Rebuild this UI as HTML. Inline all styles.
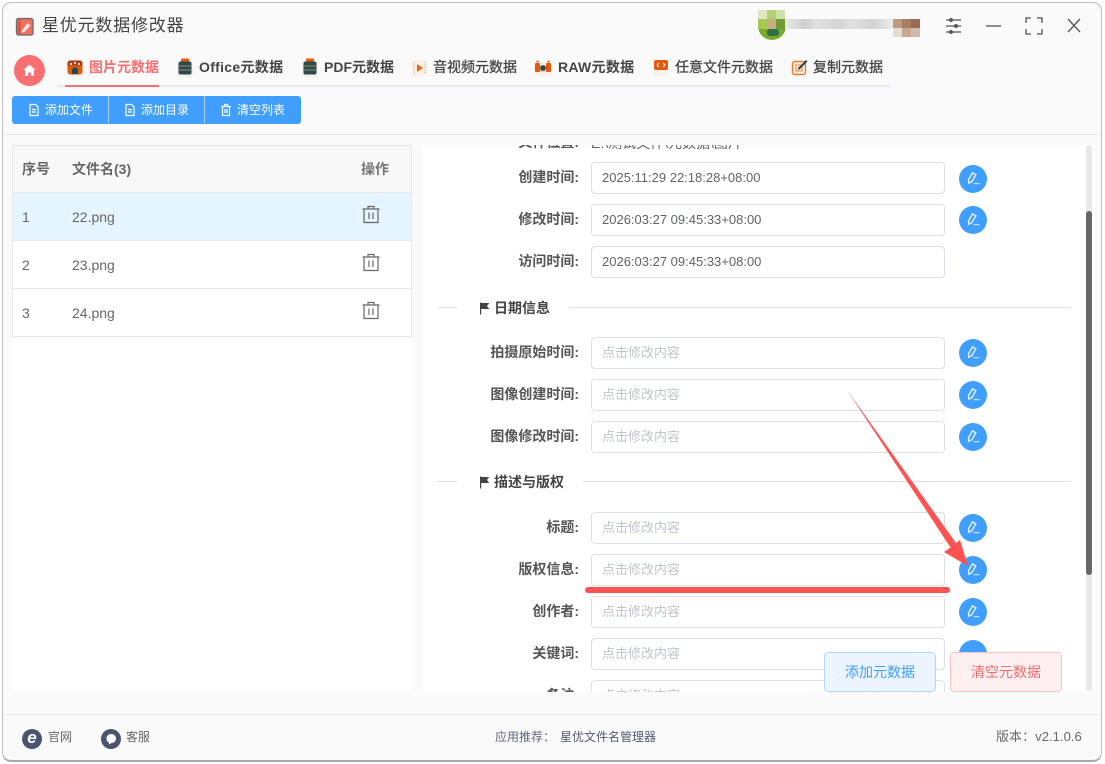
<!DOCTYPE html>
<html lang="zh"><head><meta charset="utf-8"><title>星优元数据修改器</title>
<style>
html,body{margin:0;padding:0;width:1105px;height:764px;overflow:hidden;background:#fff}
body{font-family:"Liberation Sans","Noto Sans CJK SC",sans-serif;position:relative;color:#555}
div,span,svg{position:absolute;box-sizing:border-box}
.t{white-space:nowrap;line-height:20px}
#win{left:2px;top:2px;width:1100px;height:760px;background:#fafafa;border:1px solid #bdbdbd;border-bottom:2px solid #a8a8a8;border-radius:9px}
.tab{top:57px;font-size:14px;font-weight:700;color:#444;white-space:nowrap;line-height:20px}
.tbt{top:100px;font-size:12px;color:#fff;line-height:20px;white-space:nowrap}
.cell{font-size:14px;color:#666;line-height:20px;white-space:nowrap}
.lab{width:130px;left:27px;text-align:right;font-size:14px;font-weight:700;color:#555;line-height:20px;white-space:nowrap}
.inp{left:169px;width:354px;height:32px;background:#fff;border:1px solid #dcdfe6;border-radius:4px;padding-left:10px;font-size:13px;line-height:29px;color:#606266;white-space:nowrap}
.ph{color:#c0c4cc}
.c{left:537px;width:28px;height:28px;border-radius:50%;background:#409eff}
.sec{font-size:14px;font-weight:700;color:#444;line-height:20px;white-space:nowrap}
.ln{height:1px;background:#dcdfe6}
.bg{background:#f8f1ea;border-radius:3px}
</style></head><body>
<div id="win"></div>

<!-- title -->
<svg style="left:15px;top:17px" width="20" height="20" viewBox="0 0 20 20"><rect x="1.500" y="1.500" width="16.500" height="16.500" rx="2" fill="#f0705f" stroke="#6a6a6a" stroke-width="1.300"/><rect x="3" y="2.500" width="2.500" height="14.500" fill="#d9543f"/><path d="M7 13.500l5.500-7.500 3 2.500-6 6.500-3 .8z" fill="#fbe3dc"/></svg>
<div class="t" style="left:42px;top:16px;font-size:17px;letter-spacing:.8px;color:#444">星优元数据修改器</div>

<!-- avatar blurred -->
<div style="left:758px;top:22px;width:28px;height:18px;border-radius:0 0 14px 14px;background:#7aa92f"></div>
<div style="left:758px;top:10px;width:9px;height:10px;background:#dfe8c2"></div>
<div style="left:767px;top:10px;width:9px;height:10px;background:#b2cf74"></div>
<div style="left:776px;top:10px;width:9px;height:10px;background:#cfe1a9"></div>
<div style="left:758px;top:19px;width:9px;height:10px;background:#a6c953"></div>
<div style="left:767px;top:19px;width:9px;height:10px;background:#c4b182"></div>
<div style="left:776px;top:19px;width:9px;height:10px;background:#6f9a35"></div>
<div style="left:767px;top:29px;width:12px;height:7px;border-radius:3px;background:#2f6f45"></div>
<div style="left:785px;top:19px;width:108px;height:10px;background:linear-gradient(90deg,#e8eee0 0,#dcdcdc 8%,#cfcfcf 18%,#e0e0e0 30%,#d3d3d3 50%,#e2e2e2 62%,#d2d2d2 80%,#ececec 100%)"></div>
<div style="left:893px;top:19px;width:9px;height:9px;background:#bd9a82"></div>
<div style="left:902px;top:19px;width:9px;height:9px;background:#a67f60"></div>
<div style="left:911px;top:19px;width:9px;height:9px;background:#966c50"></div>
<div style="left:893px;top:28px;width:9px;height:9px;background:#e8dbd0"></div>
<div style="left:902px;top:28px;width:9px;height:9px;background:#c9a78e"></div>
<div style="left:911px;top:28px;width:9px;height:9px;background:#cdbcae"></div>

<!-- window controls -->
<svg style="left:940px;top:12px" width="150" height="30" viewBox="0 0 150 30" fill="none" stroke="#555" stroke-width="1.300">
<path d="M6 8h15M6 14h15M6 20h15"/><circle cx="11" cy="8" r="1.300" fill="#555"/><circle cx="16" cy="14" r="1.300" fill="#555"/><circle cx="11" cy="20" r="1.300" fill="#555"/>
<path d="M46 14h15"/>
<path d="M86 11V6h5M97 6h5v5M102 17v5h-5M91 22h-5v-5"/>
<path d="M128 7l12 13M140 7l-12 13"/>
</svg>

<!-- home -->
<div style="left:14px;top:55px;width:31px;height:31px;border-radius:50%;background:#f96f72"></div>
<svg style="left:22px;top:63px" width="15" height="15" viewBox="0 0 15 15"><path d="M7.500 1.500L1.500 7h1.600v6h3V9.500h2.800V13h3V7h1.600z" fill="#fff"/></svg>

<!-- tabs -->
<div style="left:57px;top:85px;width:834px;height:2px;background:#e9e8f4"></div>
<div style="left:65px;top:85px;width:94px;height:2px;background:#f96f72"></div>
<div class="bg" style="left:66px;top:59px;width:18px;height:18px"></div>
<svg style="left:66px;top:59px" width="18" height="18" viewBox="0 0 18 18"><rect x="1.500" y="1.500" width="15" height="14" rx="3" fill="#e05a10"/><path d="M1.500 4.500q0-3 3-3h9q3 0 3 3v2h-15z" fill="#a8401a"/><path d="M6 15V10h1V8.500h4V10h1v5z" fill="#1f4a55"/><circle cx="5" cy="5" r="1" fill="#fff"/><circle cx="9" cy="4" r="1" fill="#fff"/><circle cx="13" cy="5" r="1" fill="#fff"/></svg>
<div class="tab" style="left:89px;color:#f96f72">图片元数据</div>
<div class="bg" style="left:177px;top:61px;width:16px;height:16px"></div>
<svg style="left:177px;top:58px" width="16" height="19" viewBox="0 0 16 19"><rect x="4" y="0.500" width="8" height="5" rx="1" fill="#e8590c"/><rect x="1.500" y="3.500" width="13" height="13" rx="2" fill="#2a4a50"/><path d="M2 8h12M2 12h12" stroke="#9a8a60"/></svg>
<div class="tab" style="left:199px;letter-spacing:.3px">Office元数据</div>
<div class="bg" style="left:302px;top:61px;width:16px;height:16px"></div>
<svg style="left:302px;top:58px" width="16" height="19" viewBox="0 0 16 19"><rect x="4" y="0.500" width="8" height="5" rx="1" fill="#e8590c"/><rect x="1.500" y="3.500" width="13" height="13" rx="2" fill="#2a4a50"/><path d="M2 8h12M2 12h12" stroke="#9a8a60"/></svg>
<div class="tab" style="left:324px">PDF元数据</div>
<svg style="left:411px;top:59px" width="17" height="18" viewBox="0 0 17 18"><rect x="1" y="1" width="15" height="16" rx="2" fill="#fbf1e6"/><path d="M6 5l6 4-6 4z" fill="#ee6a10"/><path d="M3 3v12M14 3v12" stroke="#c9b9a0" stroke-dasharray="1 1"/></svg>
<div class="tab" style="left:433px;font-weight:400;-webkit-text-stroke:.3px #444">音视频元数据</div>
<div class="bg" style="left:534px;top:62px;width:18px;height:14px"></div>
<svg style="left:534px;top:59px" width="18" height="16" viewBox="0 0 18 16"><rect x="1" y="4" width="5" height="9" rx="1" fill="#e8590c"/><rect x="12" y="4" width="5" height="9" rx="1" fill="#e8590c"/><rect x="6" y="6" width="6" height="7" fill="#f6c9a8"/><circle cx="9" cy="9" r="2.800" fill="#1f4a55"/><circle cx="3.500" cy="2.500" r="1.100" fill="#e8590c"/><circle cx="14.500" cy="2.500" r="1.100" fill="#e8590c"/></svg>
<div class="tab" style="left:558px;letter-spacing:.3px">RAW元数据</div>
<div class="bg" style="left:653px;top:66px;width:15px;height:10px"></div>
<svg style="left:652px;top:58px" width="18" height="17" viewBox="0 0 18 17"><rect x="2" y="2" width="14" height="10" rx="2" fill="#e8590c"/><path d="M7 5L5 7l2 2M11 5l2 2-2 2" stroke="#fff" fill="none"/></svg>
<div class="tab" style="left:675px;font-weight:400;-webkit-text-stroke:.3px #444">任意文件元数据</div>
<svg style="left:791px;top:58px" width="18" height="18" viewBox="0 0 18 18"><rect x="1.500" y="3.500" width="13" height="13" rx="2" fill="#fdf0e4" stroke="#ee7a2c" stroke-width="1.400"/><rect x="5" y="7" width="6" height="6" fill="none" stroke="#ee7a2c"/><path d="M7 10l8-8 1.500 1.500-8 8H7z" fill="#1f4a55"/></svg>
<div class="tab" style="left:813px;font-weight:400;-webkit-text-stroke:.3px #444">复制元数据</div>

<!-- toolbar -->
<div style="left:12px;top:96px;width:289px;height:28px;background:#409eff;border-radius:3px"></div>
<div style="left:108px;top:96px;width:1px;height:28px;background:#a8d2fb"></div>
<div style="left:204px;top:96px;width:1px;height:28px;background:#a8d2fb"></div>
<svg style="left:28px;top:103px" width="12" height="14" viewBox="0 0 12 14" fill="none" stroke="#fff" stroke-width="1.200"><path d="M2 1.500h5.500L10 4v8.500H2zM4 6.500h4M4 9h4"/></svg>
<div class="tbt" style="left:45px">添加文件</div>
<svg style="left:124px;top:103px" width="12" height="14" viewBox="0 0 12 14" fill="none" stroke="#fff" stroke-width="1.200"><path d="M2 1.500h5.500L10 4v8.500H2zM4 6.500h4M4 9h4"/></svg>
<div class="tbt" style="left:141px">添加目录</div>
<svg style="left:220px;top:103px" width="12" height="14" viewBox="0 0 12 14" fill="none" stroke="#fff" stroke-width="1.200"><path d="M1 3.500h10M4.500 3.500V1.500h3v2M2.500 3.500v9h7v-9M5 6v4M7 6v4"/></svg>
<div class="tbt" style="left:237px">清空列表</div>

<div style="left:3px;top:134px;width:1098px;height:1px;background:#ededed"></div>

<!-- file table -->
<div style="left:12px;top:145px;width:400px;height:546px;background:#fff"></div>
<div style="left:12px;top:145px;width:400px;height:192px;border:1px solid #e8e8e8;background:#fff"></div>
<div style="left:13px;top:146px;width:398px;height:46px;background:#f8f8f8"></div>
<div style="left:13px;top:192px;width:398px;height:1px;background:#e6eaee"></div>
<div style="left:13px;top:193px;width:398px;height:47px;background:#e4f5ff"></div>
<div style="left:13px;top:240px;width:398px;height:1px;background:#e6eaee"></div>
<div style="left:13px;top:288px;width:398px;height:1px;background:#e8e8e8"></div>
<div class="cell" style="left:22px;top:159px;font-weight:700;color:#666">序号</div>
<div class="cell" style="left:72px;top:159px;font-weight:700;color:#666">文件名(3)</div>
<div class="cell" style="left:361px;top:159px;font-weight:700;color:#777">操作</div>
<div class="cell" style="left:22px;top:207px">1</div><div class="cell" style="left:72px;top:207px">22.png</div>
<div class="cell" style="left:22px;top:255px">2</div><div class="cell" style="left:72px;top:255px">23.png</div>
<div class="cell" style="left:22px;top:303px">3</div><div class="cell" style="left:72px;top:303px">24.png</div>
<svg style="left:361px;top:204px" width="20" height="20" viewBox="0 0 20 20" fill="none" stroke="#666" stroke-width="1.200"><path d="M1.500 5h17M7 5V2.500h6V5M3 5v13.500h14V5M8 8.500v6.500M12 8.500v6.500"/></svg>
<svg style="left:361px;top:252px" width="20" height="20" viewBox="0 0 20 20" fill="none" stroke="#666" stroke-width="1.200"><path d="M1.500 5h17M7 5V2.500h6V5M3 5v13.500h14V5M8 8.500v6.500M12 8.500v6.500"/></svg>
<svg style="left:361px;top:300px" width="20" height="20" viewBox="0 0 20 20" fill="none" stroke="#666" stroke-width="1.200"><path d="M1.500 5h17M7 5V2.500h6V5M3 5v13.500h14V5M8 8.500v6.500M12 8.500v6.500"/></svg>

<!-- right panel (clipped) -->
<div style="left:422px;top:145px;width:673px;height:547px;background:#fff;overflow:hidden">
  <div class="lab" style="top:-13px">文件位置:</div>
  <div class="t" style="left:169px;top:-12px;font-size:14px;color:#606266">E:\测试文件\元数据\图片</div>

  <div class="lab" style="top:22px">创建时间:</div><div class="inp" style="top:17px">2025:11:29 22:18:28+08:00</div><div class="c" style="top:20px"></div>
  <div class="lab" style="top:64px">修改时间:</div><div class="inp" style="top:59px">2026:03:27 09:45:33+08:00</div><div class="c" style="top:61px"></div>
  <div class="lab" style="top:106px">访问时间:</div><div class="inp" style="top:101px">2026:03:27 09:45:33+08:00</div>

  <div class="ln" style="left:15px;top:162px;width:20px"></div><div class="ln" style="left:147px;top:162px;width:502px"></div>
  <svg style="left:57px;top:157px" width="11" height="13" viewBox="0 0 11 13"><path d="M1 0.500h1.200v12H1zM2.200 1h8L8 4l2.200 3h-8z" fill="#444"/></svg>
  <div class="sec" style="left:72px;top:153px">日期信息</div>

  <div class="lab" style="top:197px">拍摄原始时间:</div><div class="inp ph" style="top:192px">点击修改内容</div><div class="c" style="top:194px"></div>
  <div class="lab" style="top:239px">图像创建时间:</div><div class="inp ph" style="top:234px">点击修改内容</div><div class="c" style="top:236px"></div>
  <div class="lab" style="top:281px">图像修改时间:</div><div class="inp ph" style="top:276px">点击修改内容</div><div class="c" style="top:278px"></div>

  <div class="ln" style="left:15px;top:336px;width:20px"></div><div class="ln" style="left:161px;top:336px;width:488px"></div>
  <svg style="left:57px;top:331px" width="11" height="13" viewBox="0 0 11 13"><path d="M1 0.500h1.200v12H1zM2.200 1h8L8 4l2.200 3h-8z" fill="#444"/></svg>
  <div class="sec" style="left:72px;top:327px">描述与版权</div>

  <div class="lab" style="top:372px">标题:</div><div class="inp ph" style="top:367px">点击修改内容</div><div class="c" style="top:369px"></div>
  <div class="lab" style="top:414px">版权信息:</div><div class="inp ph" style="top:409px">点击修改内容</div><div class="c" style="top:411px"></div>
  <div class="lab" style="top:456px">创作者:</div><div class="inp ph" style="top:451px">点击修改内容</div><div class="c" style="top:453px"></div>
  <div class="lab" style="top:498px">关键词:</div><div class="inp ph" style="top:493px">点击修改内容</div><div class="c" style="top:495px"></div>
  <div class="lab" style="top:540px">备注:</div><div class="inp ph" style="top:535px">点击修改内容</div>
</div>

<!-- pencil icons -->
<svg style="left:0;top:0;pointer-events:none" width="1105" height="764" viewBox="0 0 1105 764" fill="none" stroke="#e3f0ff" stroke-width="1.400">
<defs><g id="p"><path d="M-4.200 4.200l-0.300-3.500 4-6.800 3.300 2-4 6.800z"/><path d="M0.500 4.700h6" stroke-width="1"/></g></defs>
<use href="#p" x="973" y="179"/><use href="#p" x="973" y="220"/>
<use href="#p" x="973" y="353"/><use href="#p" x="973" y="395"/><use href="#p" x="973" y="437"/>
<use href="#p" x="973" y="528"/><use href="#p" x="973" y="570"/><use href="#p" x="973" y="612"/>
</svg>

<!-- scrollbar -->
<div style="left:1086px;top:145px;width:6px;height:546px;border-radius:3px;background:#e8e9ea"></div>
<div style="left:1086px;top:211px;width:6px;height:364px;border-radius:3px;background:#666"></div>

<!-- bottom buttons -->
<div style="left:824px;top:652px;width:112px;height:40px;background:#ecf5ff;border:1px solid #b3d8ff;border-radius:4px;color:#409eff;font-size:14px;line-height:39px;text-align:center">添加元数据</div>
<div style="left:950px;top:652px;width:112px;height:40px;background:#fef0f0;border:1px solid #fbc4c4;border-radius:4px;color:#f56c6c;font-size:14px;line-height:39px;text-align:center">清空元数据</div>

<!-- annotation -->
<svg style="left:0;top:0" width="1105" height="764" viewBox="0 0 1105 764">
<polygon points="847,390 956,543 960,540 968,566 944,552 950.500,547.500" fill="#ff5252"/>
<rect x="585" y="587" width="365" height="6" rx="3" fill="#ff5252"/>
</svg>

<!-- footer -->
<div style="left:3px;top:714px;width:1098px;height:1px;background:#ececec"></div>
<div style="left:22px;top:729px;width:20px;height:20px;border-radius:50%;background:#4a5470"></div>
<div class="t" style="left:25px;top:728px;font-size:17px;font-weight:700;color:#fff;font-style:italic;width:14px;text-align:center">e</div>
<div class="t" style="left:48px;top:727px;font-size:12px;color:#666">官网</div>
<div style="left:101px;top:729px;width:20px;height:20px;border-radius:50%;background:#4a5470"></div>
<svg style="left:105px;top:733px" width="13" height="13" viewBox="0 0 13 13"><path d="M6 1c3 0 5 2 5 4.500S9 10 6.500 10L4 11.500V9.500C2.500 9 1.500 7.500 1.500 5.500 1.500 3 3.500 1 6 1z" fill="#fff"/></svg>
<div class="t" style="left:126px;top:727px;font-size:12px;color:#666">客服</div>
<div class="t" style="left:495px;top:727px;font-size:12px;color:#606a80">应用推荐：</div>
<div class="t" style="left:560px;top:727px;font-size:12px;color:#505a70">星优文件名管理器</div>
<div class="t" style="left:996px;top:727px;font-size:13px;color:#666;letter-spacing:.05px">版本：v2.1.0.6</div>
</body></html>
